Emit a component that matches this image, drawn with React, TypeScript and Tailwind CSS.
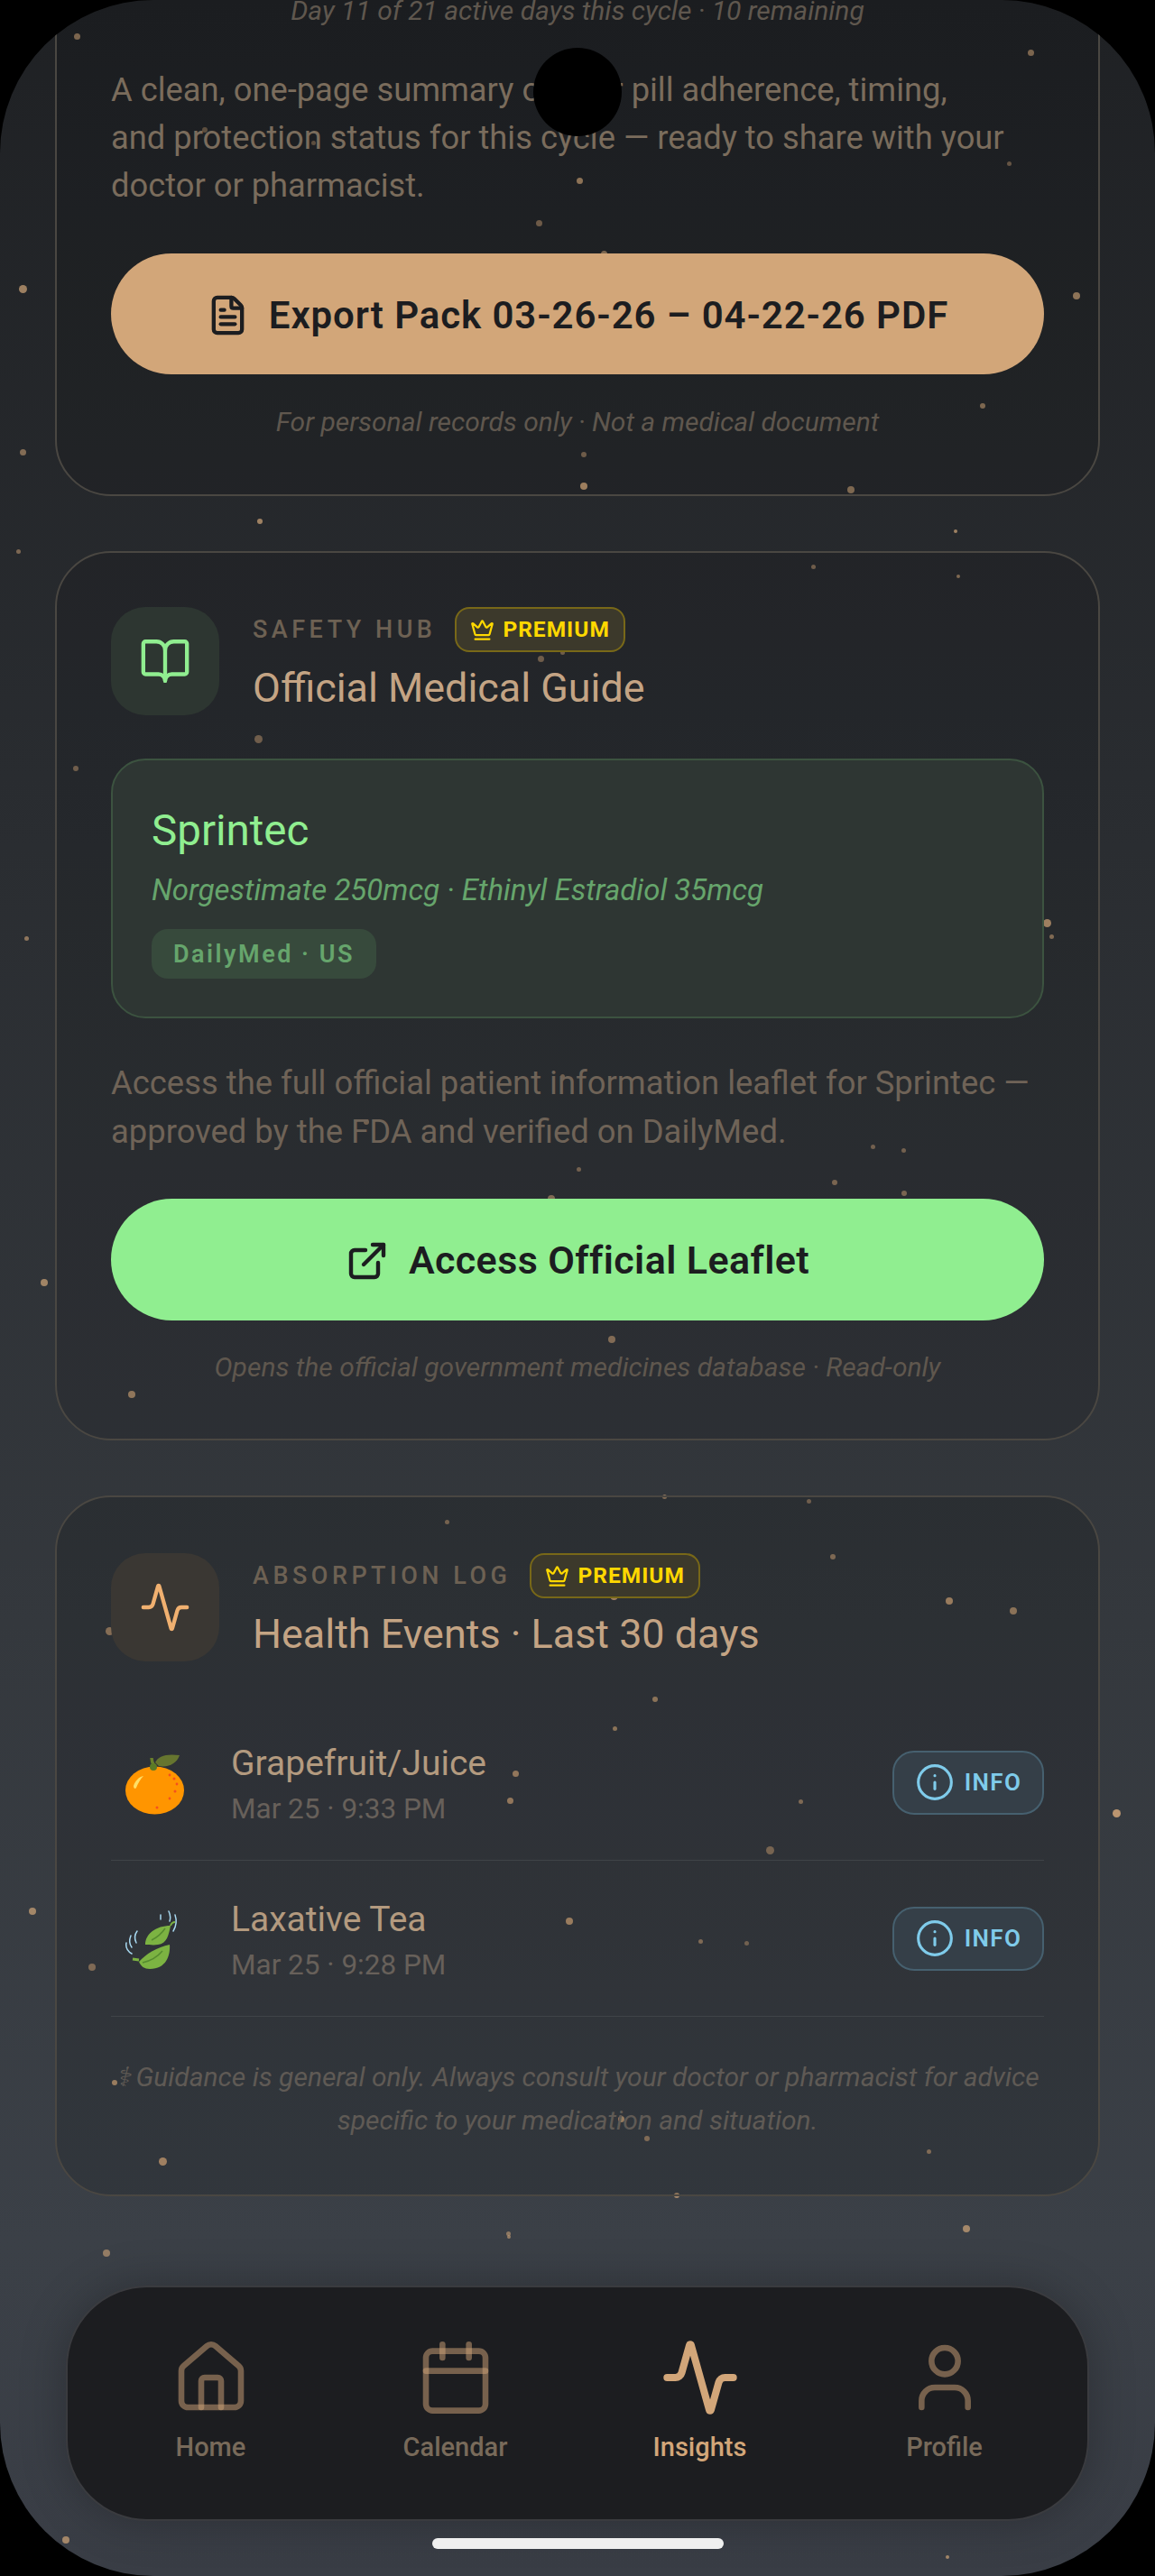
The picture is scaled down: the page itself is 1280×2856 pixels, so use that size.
import { Activity, BookOpen, Calendar, Crown, ExternalLink, FileText, House, Info, User } from 'lucide-react';

// [x, y, diameter, opacity]
const dots: number[][] = [
  [85, 40, 7, 0.6], [1142, 58, 7, 0.6], [1118, 181, 5, 0.45], [642, 200, 7, 0.7], [597, 247, 7, 0.5],
  [669, 281, 7, 0.6], [25, 320, 9, 0.7], [1193, 328, 8, 0.7], [1089, 450, 6, 0.6], [25, 501, 7, 0.55],
  [647, 504, 6, 0.5], [647, 539, 8, 0.8], [943, 543, 8, 0.6], [288, 578, 6, 0.7], [1059, 589, 4, 0.7],
  [20, 611, 5, 0.5], [227, 144, 6, 0.4], [347, 158, 5, 0.4], [901, 628, 5, 0.5], [1062, 639, 4, 0.6],
  [129, 712, 7, 0.5], [286, 819, 9, 0.5], [599, 730, 7, 0.5], [623, 723, 5, 0.5], [339, 912, 6, 0.5], [84, 852, 6, 0.5],
  [1054, 879, 7, 0.8], [1160, 1023, 9, 0.8], [1165, 1038, 5, 0.6], [938, 998, 6, 0.7], [375, 1083, 9, 0.8],
  [637, 1078, 5, 0.7], [152, 1052, 9, 0.5], [655, 1001, 5, 0.5], [29, 1040, 5, 0.6], [623, 1193, 5, 0.5],
  [49, 1422, 8, 0.7], [146, 1546, 8, 0.7], [925, 1311, 6, 0.55], [1002, 1323, 6, 0.55], [611, 1329, 8, 0.6],
  [967, 1271, 5, 0.5], [1001, 1275, 5, 0.5], [641, 1296, 5, 0.5], [406, 1244, 6, 0.5], [678, 1485, 8, 0.6],
  [736, 1659, 5, 0.6], [896, 1664, 5, 0.5], [923, 1726, 6, 0.6], [1052, 1775, 8, 0.8], [1123, 1786, 8, 0.7],
  [495, 1687, 5, 0.55], [121, 1808, 9, 0.65], [680, 1769, 9, 0.85], [726, 1884, 6, 0.7], [681, 1916, 5, 0.7],
  [571, 1966, 7, 0.75], [565, 1996, 7, 0.75], [853, 2051, 9, 0.55], [631, 2130, 8, 0.8], [827, 2154, 5, 0.5],
  [102, 2181, 8, 0.6], [887, 1997, 5, 0.6], [776, 2152, 5, 0.6], [36, 2119, 8, 0.7], [127, 2309, 6, 0.8],
  [688, 2349, 7, 0.8], [717, 2371, 6, 0.6], [180, 2396, 9, 0.85], [750, 2434, 6, 0.7], [118, 2498, 8, 0.6],
  [563, 2476, 5, 0.55], [1071, 2471, 8, 0.7], [1029, 2385, 5, 0.6], [1237, 2010, 9, 0.85], [73, 2816, 8, 0.7],
  [1050, 2835, 4, 0.7], [564, 2480, 4, 0.6],
];

function PremiumBadge() {
  return (
    <div className="flex h-[50px] items-center gap-[9px] rounded-[16px] border-2 border-[#786818] bg-[#3c392b] px-[15px]">
      <Crown size={27} strokeWidth={2} className="text-[#ffd800]" />
      <span className="text-[24.500px] font-bold tracking-[1px] text-[#ffd800]">PREMIUM</span>
    </div>
  );
}

function CardHeader({ label, title, tile, icon }: { label: string; title: string; tile: string; icon: React.ReactNode }) {
  return (
    <div className="flex gap-[37px]">
      <div className={`flex h-[120px] w-[120px] shrink-0 items-center justify-center rounded-[38px] ${tile}`}>{icon}</div>
      <div>
        <div className="flex h-[50px] items-center gap-[21px]">
          <span className="text-[27px] font-medium tracking-[4.500px] text-[#6d6153]">{label}</span>
          <PremiumBadge />
        </div>
        <div className="mt-[13px] text-[44.900px] leading-[54px] text-[#c4a484]">{title}</div>
      </div>
    </div>
  );
}

function OrangeEmoji() {
  return (
    <svg width="68" height="68" viewBox="0 0 68 68">
      <ellipse cx="33.500" cy="41" rx="32.500" ry="26.500" fill="#ff9500" />
      <path d="M10 36c2-6 6-10 11-11-3 3-6 8-8 13-1 2-3 1-3-2z" fill="#ffe066" />
      <path d="M33 14c-2-3-3-6-3-9" stroke="#687f2b" strokeWidth="3.500" fill="none" />
      <circle cx="32" cy="15" r="4" fill="#5b7a26" />
      <path d="M34 10c3-7 12-10 27-8-3 9-12 14-23 12z" fill="#66752f" />
      <g fill="#f4511e">
        <circle cx="50" cy="24" r="1.400" /><circle cx="55" cy="28" r="1.500" /><circle cx="58" cy="34" r="1.400" />
        <circle cx="56" cy="42" r="1.500" /><circle cx="50" cy="50" r="1.400" /><circle cx="36" cy="60" r="1.500" />
      </g>
    </svg>
  );
}

function LeafEmoji() {
  return (
    <svg width="60" height="66" viewBox="0 0 60 66" fill="none">
      <path d="M23 38c0-12 12-21 28-21-2 10-4 20-14 21-5 1-10 0-14 0z" fill="#7cb342" />
      <path d="M30 33c6-3 11-7 15-13" stroke="#558b2f" strokeWidth="1.500" />
      <path d="M51 17c1-3 3-4 5-4" stroke="#7cb342" strokeWidth="2" />
      <path d="M50 38c1 12-4 27-22 27-6 0-10-3-12-8 8-9 20-16 34-19z" fill="#7cb342" />
      <path d="M20 58c9-2 17-7 22-13" stroke="#558b2f" strokeWidth="1.500" />
      <path d="M16 55l-7-1" stroke="#7cb342" strokeWidth="3" />
      <g stroke="#a7d8f0" strokeWidth="1.500" strokeLinecap="round">
        <path d="M40 5v5" /><path d="M49 1c2 4 2 8 1 11" /><path d="M56 5c2 6 1 13-2 18" />
        <path d="M14 23c-3 4-3 9-1 13" /><path d="M7 28c-2 5-2 9 1 13" /><path d="M2 36c-1 5 1 9 6 12" />
      </g>
    </svg>
  );
}

function EventRow({ name, when, emoji }: { name: string; when: string; emoji: React.ReactNode }) {
  return (
    <div className="flex h-[173px] items-center border-b border-[#3f4347]">
      <div className="flex w-[133px] shrink-0 pt-[3px] pl-[15px]">{emoji}</div>
      <div className="grow pt-[3px]">
        <div className="text-[39px] leading-[48px] text-[#b39a7f]">{name}</div>
        <div className="mt-[8px] text-[31.500px] leading-[38px] text-[#67605a]">{when}</div>
      </div>
      <div className="flex h-[71px] w-[168px] items-center justify-center gap-[11px] rounded-[24px] border-2 border-[#46606f] bg-[#353f48]">
        <Info size={44} strokeWidth={1.700} className="text-[#7fcbea]" />
        <span className="text-[26px] font-semibold tracking-[1.300px] text-[#7fcbea]">INFO</span>
      </div>
    </div>
  );
}

function NavItem({ label, icon, active }: { label: string; icon: React.ReactNode; active?: boolean }) {
  return (
    <div className="flex w-[271px] flex-col items-center">
      <div className="flex h-[88px] items-center justify-center">{icon}</div>
      <span className={`mt-[15px] text-[29px] leading-[36px] font-medium ${active ? 'text-[#d2a679]' : 'text-[#786a5a]'}`}>{label}</span>
    </div>
  );
}

export default function App() {
  return (
    <div className="h-[2856px] w-[1280px] bg-black [font-family:Roboto,sans-serif]">
      <div className="relative h-full w-full overflow-hidden rounded-[170px] bg-[linear-gradient(to_bottom,#1f2124_0%,#34383d_63%,#3b4047_87%,#393d45_100%)]">
        {dots.map(([x, y, d, o], i) => (
          <div
            key={i}
            className="absolute rounded-full bg-[#d2a679]"
            style={{ left: x - d / 2, top: y - d / 2, width: d, height: d, opacity: o }}
          />
        ))}

        <div className="relative flex flex-col gap-[61px] px-[61px]">
          {/* export card, top is scrolled off */}
          <section className="-mt-[300px] h-[850px] rounded-[62px] border-2 border-[#4a4742] bg-black/10 px-[60px] pt-[290px]">
            <p className="text-center text-[30px] leading-[40px] text-[#5f574e] italic">Day 11 of 21 active days this cycle · 10 remaining</p>
            <p className="mt-[41px] text-[36.300px] leading-[53px] text-[#7a6c5c]">
              A clean, one-page summary of your pill adherence, timing,
              <br />
              and protection status for this cycle — ready to share with your doctor or pharmacist.
            </p>
            <button className="mt-[49px] flex h-[134px] w-full items-center justify-center gap-[22px] rounded-full bg-[#d2a679] pt-[2px] text-[42px] font-semibold tracking-[0.900px] text-[#1c1d20]">
              <FileText size={47} strokeWidth={2.200} />
              Export Pack 03-26-26 – 04-22-26 PDF
            </button>
            <p className="mt-[33px] text-center text-[30px] leading-[40px] text-[#5f574e] italic">For personal records only · Not a medical document</p>
          </section>

          <section className="h-[986px] rounded-[62px] border-2 border-[#4a4742] bg-black/10 px-[60px] pt-[60px]">
            <CardHeader
              label="SAFETY HUB"
              title="Official Medical Guide"
              tile="bg-[#2d3631]"
              icon={<BookOpen size={58} strokeWidth={1.800} className="text-[#90ee90]" />}
            />
            <div className="mt-[48px] h-[288px] rounded-[38px] border-2 border-[#3c5340] bg-[#2e3633] px-[43px] pt-[50px]">
              <div className="text-[47.500px] leading-[56px] text-[#90ee90]">Sprintec</div>
              <div className="mt-[17px] text-[33px] leading-[42px] text-[#66a56c] italic">Norgestimate 250mcg · Ethinyl Estradiol 35mcg</div>
              <div className="mt-[22px] inline-flex h-[55px] items-center rounded-[18px] bg-[#374a3c] px-[24px] pt-[2px] text-[27px] font-semibold tracking-[2.500px] text-[#66a56c]">
                DailyMed · US
              </div>
            </div>
            <p className="mt-[45px] text-[36.400px] leading-[54px] text-[#6f6357]">
              Access the full official patient information leaflet for Sprintec — approved by the FDA and verified on DailyMed.
            </p>
            <button className="mt-[47px] flex h-[135px] w-full items-center justify-center gap-[22px] rounded-full bg-[#90ee90] pt-[2px] text-[43px] font-semibold tracking-[0.400px] text-[#1c1d20]">
              <ExternalLink size={48} strokeWidth={2.200} />
              Access Official Leaflet
            </button>
            <p className="mt-[32px] text-center text-[30px] leading-[40px] text-[#5f574e] italic">Opens the official government medicines database · Read-only</p>
          </section>

          <section className="h-[777px] rounded-[62px] border-2 border-[#4a4742] bg-black/[0.14] px-[60px] pt-[62px]">
            <CardHeader
              label="ABSORPTION LOG"
              title="Health Events · Last 30 days"
              tile="bg-[#3a3733]"
              icon={<Activity size={58} strokeWidth={1.800} className="text-[#f0b070]" />}
            />
            <div className="mt-[48px]">
              <EventRow name="Grapefruit/Juice" when="Mar 25 · 9:33 PM" emoji={<OrangeEmoji />} />
              <EventRow name="Laxative Tea" when="Mar 25 · 9:28 PM" emoji={<LeafEmoji />} />
            </div>
            <p className="mt-[43px] text-center text-[30px] leading-[48px] text-[#5f5a55] italic">
              ⚕&thinsp;Guidance is general only. Always consult your doctor or pharmacist for advice specific to your medication and situation.
            </p>
          </section>
        </div>

        <nav className="absolute top-[2534px] left-[73px] flex h-[261px] w-[1134px] justify-center rounded-[90px] border-2 border-[#3a3b3f] bg-[#1c1d20] pt-[56px] shadow-[0_0_50px_rgba(0,0,0,0.25)]">
          <NavItem label="Home" icon={<House size={88} strokeWidth={1.800} className="text-[#d2a679]/50" />} />
          <NavItem label="Calendar" icon={<Calendar size={88} strokeWidth={1.800} className="text-[#d2a679]/50" />} />
          <NavItem label="Insights" active icon={<Activity size={88} strokeWidth={2.200} className="text-[#d2a679]" />} />
          <NavItem label="Profile" icon={<User size={88} strokeWidth={1.800} className="text-[#d2a679]/50" />} />
        </nav>

        <div className="absolute top-[2814px] left-[479px] h-[12px] w-[323px] rounded-full bg-[#efefef]" />
        <div className="absolute top-[53px] left-[591px] h-[98px] w-[98px] rounded-full bg-black" />
      </div>
    </div>
  );
}
